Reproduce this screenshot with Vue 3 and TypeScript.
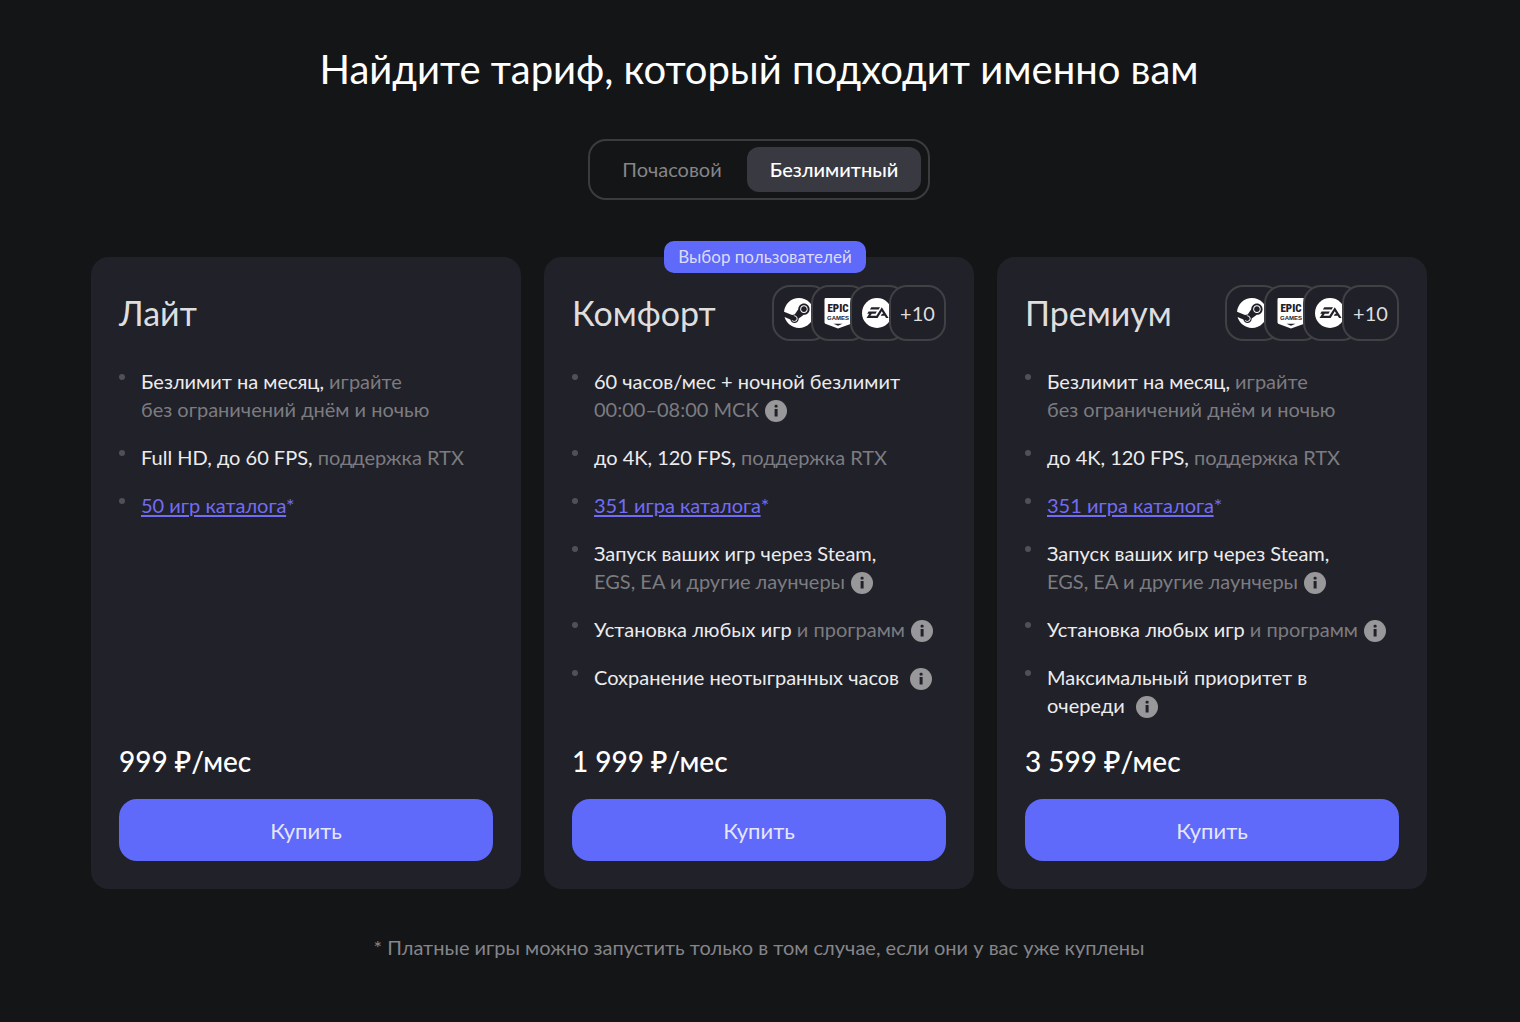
<script setup lang="ts">
import { ref } from 'vue'

interface Feature {
  text?: string
  muted?: string
  link?: string
  breakBefore?: boolean
  info?: boolean
}

interface Plan {
  id: string
  name: string
  price: string
  badge?: string
  launchers: boolean
  features: Feature[]
}

const modes = ['Почасовой', 'Безлимитный']
const activeMode = ref('Безлимитный')

const plans: Plan[] = [
  {
    id: 'light',
    name: 'Лайт',
    price: '999 ₽/мес',
    launchers: false,
    features: [
      { text: 'Безлимит на месяц,', muted: 'играйте\nбез ограничений днём и ночью' },
      { text: 'Full HD, до 60 FPS,', muted: 'поддержка RTX' },
      { link: '50 игр каталога' },
    ],
  },
  {
    id: 'comfort',
    name: 'Комфорт',
    price: '1 999 ₽/мес',
    badge: 'Выбор пользователей',
    launchers: true,
    features: [
      { text: '60 часов/мес + ночной безлимит', muted: '00:00–08:00 МСК', breakBefore: true, info: true },
      { text: 'до 4K, 120 FPS,', muted: 'поддержка RTX' },
      { link: '351 игра каталога' },
      { text: 'Запуск ваших игр через Steam,', muted: 'EGS, EA и другие лаунчеры', breakBefore: true, info: true },
      { text: 'Установка любых игр', muted: 'и программ', info: true },
      { text: 'Сохранение неотыгранных часов', info: true },
    ],
  },
  {
    id: 'premium',
    name: 'Премиум',
    price: '3 599 ₽/мес',
    launchers: true,
    features: [
      { text: 'Безлимит на месяц,', muted: 'играйте\nбез ограничений днём и ночью' },
      { text: 'до 4K, 120 FPS,', muted: 'поддержка RTX' },
      { link: '351 игра каталога' },
      { text: 'Запуск ваших игр через Steam,', muted: 'EGS, EA и другие лаунчеры', breakBefore: true, info: true },
      { text: 'Установка любых игр', muted: 'и программ', info: true },
      { text: 'Максимальный приоритет в\nочереди', info: true },
    ],
  },
]
</script>

<template>
  <main class="page">
    <h1 class="heading">Найдите тариф, который подходит именно вам</h1>

    <div class="switch" role="group" aria-label="Тип тарифа">
      <button
        v-for="mode in modes"
        :key="mode"
        type="button"
        class="switch-item"
        :class="{ active: mode === activeMode }"
        :aria-pressed="mode === activeMode"
        @click="activeMode = mode"
      >
        {{ mode }}
      </button>
    </div>

    <section class="plans">
      <article v-for="plan in plans" :key="plan.id" class="plan">
        <span v-if="plan.badge" class="badge">{{ plan.badge }}</span>

        <header class="plan-header">
          <h2 class="plan-name">{{ plan.name }}</h2>
          <div v-if="plan.launchers" class="launchers">
            <span class="launcher">
              <svg class="launcher-icon" viewBox="0 0 24 24" aria-label="Steam">
                <path
                  fill="#fff"
                  d="M11.979 0C5.678 0 .511 4.86.022 11.037l6.432 2.658c.545-.371 1.203-.59 1.912-.59.063 0 .125.004.188.006l2.861-4.142V8.91c0-2.495 2.028-4.524 4.524-4.524 2.494 0 4.524 2.031 4.524 4.527s-2.03 4.525-4.524 4.525h-.105l-4.076 2.911c0 .052.004.105.004.159 0 1.875-1.515 3.396-3.39 3.396-1.635 0-3.016-1.173-3.331-2.727L.436 15.27C1.862 20.307 6.486 24 11.979 24c6.627 0 11.999-5.373 11.999-12S18.605 0 11.979 0zM7.54 18.21l-1.473-.61c.262.543.714.999 1.314 1.25 1.297.539 2.793-.076 3.332-1.375.263-.63.264-1.319.005-1.949s-.75-1.121-1.377-1.383c-.624-.26-1.29-.249-1.878-.03l1.523.63c.956.4 1.409 1.5 1.009 2.455-.397.957-1.497 1.41-2.454 1.012H7.54zm11.415-9.303c0-1.662-1.353-3.015-3.015-3.015-1.665 0-3.015 1.353-3.015 3.015 0 1.665 1.35 3.015 3.015 3.015 1.663 0 3.015-1.35 3.015-3.015zm-5.273-.005c0-1.252 1.013-2.266 2.265-2.266 1.249 0 2.266 1.014 2.266 2.266 0 1.251-1.017 2.265-2.266 2.265-1.253 0-2.265-1.014-2.265-2.265z"
                />
              </svg>
            </span>
            <span class="launcher">
              <svg class="launcher-icon" viewBox="0 0 30 30" aria-label="Epic Games">
                <path fill="#fff" d="M2.500 0h25a1.500 1.500 0 0 1 1.500 1.500V24c0 1-.5 1.600-1.400 2L15 30.500 2.900 26C2 25.600 1.500 25 1.500 24V1.500A1.500 1.500 0 0 1 2.500 0z" />
                <text class="epic-name" x="15" y="14" text-anchor="middle">EPIC</text>
                <text class="epic-sub" x="15" y="22" text-anchor="middle">GAMES</text>
                <path fill="#212129" d="M10.500 25.800h9L15 27.700z" />
              </svg>
            </span>
            <span class="launcher">
              <svg class="launcher-icon" viewBox="0 0 30 30" aria-label="EA">
                <circle cx="15" cy="15" r="15" fill="#fff" />
                <path
                  fill="#212129"
                  transform="translate(4.500 3.500) scale(.92)"
                  d="M16.635 6.162l-5.928 9.377H4.24l1.508-2.3h4.024l1.474-2.335H2.264L.79 13.239h2.156L0 17.84h12.072l4.563-7.259 1.652 2.66h-1.401l-1.473 2.299h4.347l1.473 2.3H24zm-11.461.107L3.7 8.604l9.52-.035 1.474-2.3z"
                />
              </svg>
            </span>
            <span class="launcher">+10</span>
          </div>
        </header>

        <ul class="features">
          <li v-for="(feature, i) in plan.features" :key="i" class="feature">
            <template v-if="feature.link"><a class="catalog" href="#catalog">{{ feature.link }}</a><span class="star">*</span></template>
            <template v-else>
              <span class="lead">{{ feature.text }}</span>
              <br v-if="feature.breakBefore" />
              {{ ' ' }}<span v-if="feature.muted" class="muted">{{ feature.muted }}</span>
            </template><button v-if="feature.info" type="button" class="info" aria-label="Подробнее">
              <svg viewBox="0 0 22 22" width="22" height="22" aria-hidden="true">
                <circle cx="11" cy="11" r="11" fill="#98989b" />
                <rect x="9.600" y="4.800" width="3" height="2.800" rx="1.200" fill="#212129" />
                <path d="M9.600 9h3v7.500h-3z" fill="#212129" />
              </svg>
            </button>
          </li>
        </ul>

        <p class="price">{{ plan.price }}</p>
        <button type="button" class="buy">Купить</button>
      </article>
    </section>

    <p class="footnote">* Платные игры можно запустить только в том случае, если они у вас уже куплены</p>
  </main>
</template>

<style>
body {
  margin: 0;
  background: #141517;
}
</style>

<style scoped>
.page {
  box-sizing: border-box;
  min-height: 100vh;
  padding: 43px 93px 44px 91px;
  display: flex;
  flex-direction: column;
  align-items: center;
  background: #141517;
  color: #ececee;
  font-family: Lato, "Noto Sans", sans-serif;
  font-size: 20px;
  line-height: 28px;
}

.heading {
  margin: 0;
  font-size: 40px;
  line-height: 52px;
  font-weight: 400;
  color: #fff;
  text-align: center;
}

button {
  margin: 0;
  border: 0;
  font: inherit;
  cursor: pointer;
}

.switch {
  display: flex;
  margin-top: 44px;
  padding: 6px 7px;
  border: 2px solid #3c3c40;
  border-radius: 18px;
}

.switch-item {
  min-width: 150px;
  height: 45px;
  padding: 0 22px 2px;
  border-radius: 12px;
  background: transparent;
  color: #858588;
}

.switch-item.active {
  min-width: 174px;
  background: #393942;
  color: #fff;
  font-weight: 500;
}

.plans {
  width: 100%;
  margin-top: 57px;
  display: grid;
  grid-template-columns: repeat(3, minmax(0, 1fr));
  gap: 23px;
}

.plan {
  position: relative;
  display: flex;
  flex-direction: column;
  padding: 28px;
  border-radius: 18px;
  background: #212129;
}

.badge {
  position: absolute;
  top: -16px;
  left: 120px;
  box-sizing: border-box;
  min-width: 202px;
  padding: 2px 11px;
  border-radius: 10px;
  background: #5f69fa;
  color: #dcdcfa;
  font-size: 17px;
  text-align: center;
  white-space: nowrap;
}

.plan-header {
  display: flex;
  align-items: center;
  justify-content: space-between;
  min-height: 56px;
}

.plan-name {
  margin: 0;
  font-size: 34px;
  line-height: 44px;
  font-weight: 400;
  color: #dededf;
}

.launchers {
  display: flex;
}

.launcher {
  box-sizing: border-box;
  width: 57px;
  height: 56px;
  display: flex;
  align-items: center;
  justify-content: center;
  border: 2px solid #404045;
  border-radius: 18px;
  background: #202028;
  color: #dededf;
}

.launcher + .launcher {
  margin-left: -18px;
}

.launcher-icon {
  width: 30px;
  height: 30px;
  margin-right: 4px;
  overflow: visible;
}

.epic-name {
  font-family: "Roboto Condensed", Roboto, sans-serif;
  font-size: 11px;
  font-weight: 900;
  fill: #212129;
}

.epic-sub {
  font-family: "Liberation Sans", sans-serif;
  font-size: 6px;
  font-weight: 700;
  fill: #212129;
}

.features {
  flex: 1;
  margin: 26px 0 0;
  padding: 0;
  list-style: none;
  display: flex;
  flex-direction: column;
  gap: 20px;
}

.feature {
  position: relative;
  padding-left: 22px;
}

.feature::before {
  content: "";
  position: absolute;
  top: 7px;
  left: 0;
  width: 6px;
  height: 6px;
  border-radius: 50%;
  background: #505056;
}

.lead,
.muted {
  white-space: pre-line;
}

.muted {
  color: #7c7c80;
}

.catalog,
.star {
  color: #726cf3;
}

.catalog {
  text-decoration: underline;
  text-decoration-thickness: 2px;
  text-underline-offset: 2px;
}

.info {
  height: 22px;
  margin: 5px 0 0 6px;
  padding: 0;
  background: none;
  vertical-align: top;
}

.info svg {
  display: block;
}

.price {
  margin: 24px 0 0;
  font-size: 28px;
  line-height: 36px;
  font-weight: 500;
  color: #fff;
}

.buy {
  width: 100%;
  height: 62px;
  margin-top: 20px;
  padding: 2px 0 0;
  border-radius: 18px;
  background: #5f69fa;
  color: #e6e6fc;
  font-size: 22px;
}

.footnote {
  margin: 44px 0 0;
  color: #85858a;
  text-align: center;
}
</style>
